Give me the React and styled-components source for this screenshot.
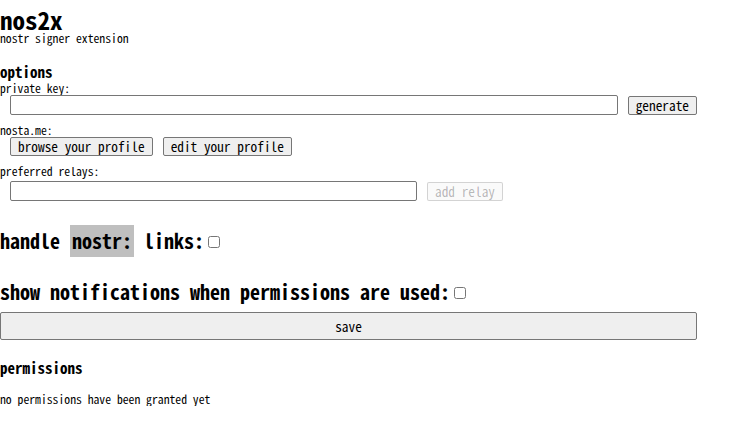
import React from 'react';
import styled, { createGlobalStyle } from 'styled-components';

const Global = createGlobalStyle`
    body {
        margin: 0;
        background: #fff;
        color: #000;
        font-family: "Noto Sans Mono CJK JP", "Noto Sans CJK JP", monospace;
    }
`

const Page = styled.div`
    width: 697px;
    display: flex;
    flex-direction: column;
`
const Title = styled.h1`
    margin: 8px 0 0;
    font-size: 25px;
    line-height: 23px;
    font-weight: bold;
`
const Tagline = styled.p`
    margin: 0;
    font-size: 11.7px;
    line-height: 14px;
`
const Section = styled.h2`
    margin: ${p => p.$top || 18}px 0 0;
    font-size: 15px;
    line-height: 18px;
    font-weight: bold;
`
const Label = styled.div`
    margin-top: ${p => p.$top || 0}px;
    font-size: 11.7px;
    line-height: 14px;
`
const Row = styled.div`
    display: flex;
    align-items: center;
    gap: 10px;
    margin: ${p => p.$top || 0}px 0 0 10px;
`
const TextInput = styled.input`
    box-sizing: border-box;
    width: ${p => p.$width}px;
    height: 20px;
    margin: 0;
    border: 1px solid #767676;
    border-radius: 2px;
    background: #fff;
`
const Button = styled.button`
    box-sizing: border-box;
    height: 19px;
    margin: 0;
    padding: 0 7px;
    font-family: inherit;
    font-size: 13.333px;
    line-height: 17px;
    color: #000;
    background: #efefef;
    border: 1px solid #767676;
    border-radius: 2px;
    &:disabled {
        color: rgba(16, 16, 16, 0.3);
        background: rgba(239, 239, 239, 0.3);
        border-color: rgba(118, 118, 118, 0.3);
    }
`
const Toggle = styled.label`
    display: block;
    margin-top: ${p => p.$top}px;
    font-size: 20px;
    line-height: 24px;
    font-weight: bold;
    white-space: pre;
`
const Code = styled.code`
    font-family: inherit;
    background: #bfbfbf;
    padding: 1px 2px 2px;
`
const Check = styled.input`
    width: 12px;
    height: 12px;
    margin: 0 0 0 4px;
    vertical-align: 1px;
`
const SaveButton = styled(Button)`
    width: 100%;
    height: 28px;
    margin-top: 8px;
`
const Note = styled.p`
    margin: 15px 0 0;
    font-size: 11.7px;
    line-height: 14px;
`

export default function App() {
    return (
        <Page>
            <Global/>
            <Title>nos2x</Title>
            <Tagline>nostr signer extension</Tagline>
            <Section>options</Section>
            <Label>private key:</Label>
            <Row>
                <TextInput $width={608}/>
                <Button>generate</Button>
            </Row>
            <Label $top={8}>nosta.me:</Label>
            <Row>
                <Button>browse your profile</Button>
                <Button>edit your profile</Button>
            </Row>
            <Label $top={8}>preferred relays:</Label>
            <Row $top={3}>
                <TextInput $width={407}/>
                <Button disabled>add relay</Button>
            </Row>
            <Toggle $top={28}>handle <Code>nostr:</Code> links:<Check type="checkbox"/></Toggle>
            <Toggle $top={27}>show notifications when permissions are used:<Check type="checkbox"/></Toggle>
            <SaveButton>save</SaveButton>
            <Section $top={19}>permissions</Section>
            <Note>no permissions have been granted yet</Note>
        </Page>
    )
}
